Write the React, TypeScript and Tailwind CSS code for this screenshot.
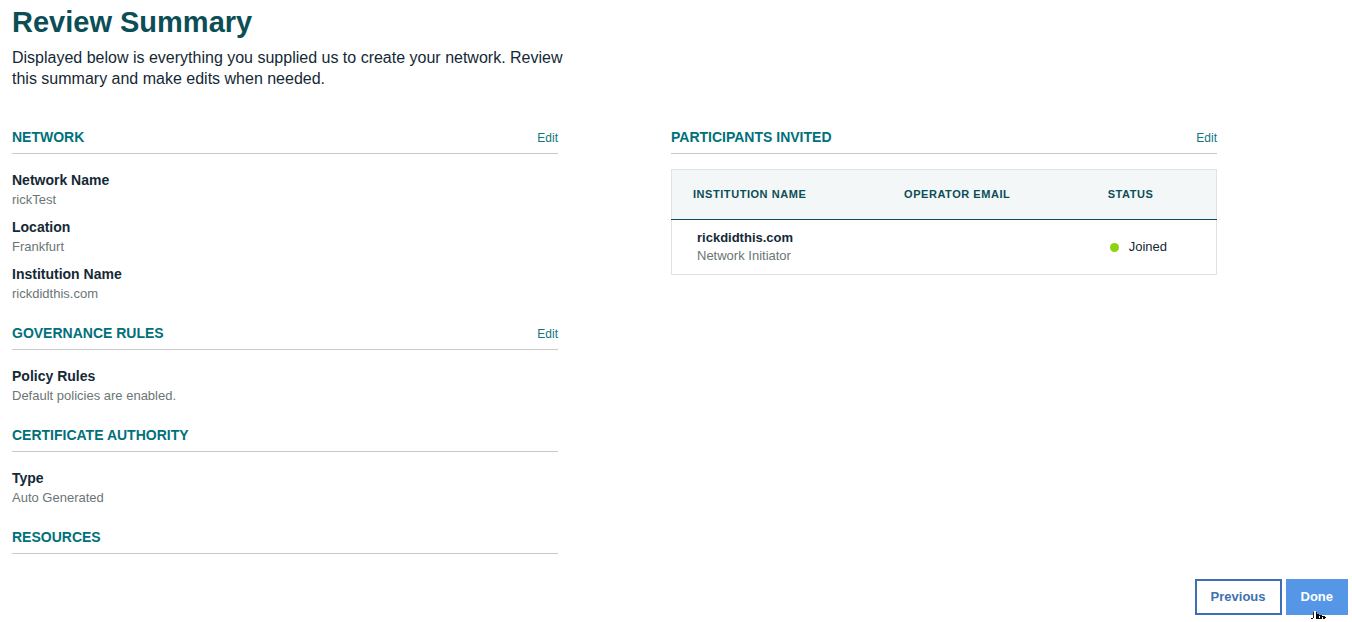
import type { ReactNode } from 'react';

type Field = { label: string; value: string };

const participants = [
  { institution: 'rickdidthis.com', role: 'Network Initiator', email: '', status: 'Joined' },
];

function SectionHeader({ title, editable = false }: { title: string; editable?: boolean }) {
  return (
    <div className="flex items-center justify-between border-b border-[#c7c9ca] pb-2">
      <h2 className="text-sm leading-4 font-bold text-[#00707a] uppercase">{title}</h2>
      {editable && (
        <a href="#edit" aria-label={`Edit ${title}`} className="pt-0.5 text-xs leading-3 text-[#0f7680]">
          Edit
        </a>
      )}
    </div>
  );
}

function Section({ title, editable, fields }: { title: string; editable?: boolean; fields: Field[] }) {
  return (
    <section>
      <SectionHeader title={title} editable={editable} />
      {fields.length > 0 && (
        <dl className="flex flex-col gap-[7px] pt-[15px] pb-[22px]">
          {fields.map((f) => (
            <div key={f.label}>
              <dt className="text-sm leading-[22px] font-bold text-[#152935]">{f.label}</dt>
              <dd className="text-[13px] leading-[18px] text-[#6b7576]">{f.value}</dd>
            </div>
          ))}
        </dl>
      )}
    </section>
  );
}

function HeadCell({ children, className }: { children: ReactNode; className: string }) {
  return (
    <th scope="col" className={`h-[50px] text-left text-[11px] font-bold tracking-wider text-[#0b4e56] uppercase ${className}`}>
      {children}
    </th>
  );
}

export default function App() {
  return (
    <main className="bg-white pt-1 font-['Liberation_Sans',Arial,sans-serif] text-[#152935]">
      <header className="px-3">
        <h1 className="text-[29px] leading-9 font-bold text-[#0b4e56]">Review Summary</h1>
        <p className="max-w-[570px] pt-[7px] text-base leading-[21px]">
          Displayed below is everything you supplied us to create your network. Review this summary and make edits when
          needed.
        </p>
      </header>

      <div className="grid grid-cols-2 pt-10 pr-[22px] pl-3">
        <div className="pr-[113px]">
          <Section
            title="Network"
            editable
            fields={[
              { label: 'Network Name', value: 'rickTest' },
              { label: 'Location', value: 'Frankfurt' },
              { label: 'Institution Name', value: 'rickdidthis.com' },
            ]}
          />
          <Section
            title="Governance Rules"
            editable
            fields={[{ label: 'Policy Rules', value: 'Default policies are enabled.' }]}
          />
          <Section title="Certificate Authority" fields={[{ label: 'Type', value: 'Auto Generated' }]} />
          <Section title="Resources" fields={[]} />
        </div>

        <section className="pr-[113px]">
          <SectionHeader title="Participants Invited" editable />
          <table className="mt-[15px] w-full table-fixed border-collapse border border-[#dfe3e4]">
            <thead className="border-b border-[#0b4e56] bg-[#f4f7f8]">
              <tr>
                <HeadCell className="w-[39%] pl-[21px]">Institution Name</HeadCell>
                <HeadCell className="w-[37%] pl-5">Operator Email</HeadCell>
                <HeadCell className="pl-[22px]">Status</HeadCell>
              </tr>
            </thead>
            <tbody>
              {participants.map((p) => (
                <tr key={p.institution} className="h-[55px]">
                  <td className="pl-[25px] text-[13px] leading-[18px]">
                    <div className="font-bold">{p.institution}</div>
                    <div className="text-[#6b7576]">{p.role}</div>
                  </td>
                  <td>{p.email}</td>
                  <td className="pl-6 text-[13px]">
                    <span className="flex items-center gap-2.5">
                      <span className="size-[9px] rounded-full bg-[#8cd211]" />
                      {p.status}
                    </span>
                  </td>
                </tr>
              ))}
            </tbody>
          </table>
        </section>
      </div>

      <footer className="flex justify-end gap-1 pt-[25px] pr-1 pb-1.5">
        <button type="button" className="h-9 border-2 border-[#3d70b2] px-3.5 text-[13px] font-bold text-[#3d70b2]">
          Previous
        </button>
        <button type="button" className="relative h-9 bg-[#5596e6] px-[15px] text-[13px] font-bold text-white">
          Done
          <svg
            className="absolute top-8 left-[25px] h-2 w-4 overflow-visible"
            viewBox="0 0 16 8"
            preserveAspectRatio="none"
            aria-hidden="true"
          >
            <path d="M3 0h2v1h1v2h2v1h3v1h3v1h1v2h-1H5V7H2V6h1z" fill="#0a0a0a" />
            <path d="M0 7h2v1H0z" fill="#0a0a0a" />
            <path d="M3 0h2v8H3z" fill="#fff" />
            <path d="M2 1h1v6H2z" fill="#222" />
            <path d="M8 5h1v2H8zM11 6h1v2h-1zM14 7h1v1h-1z" fill="#fff" />
          </svg>
        </button>
      </footer>
    </main>
  );
}
